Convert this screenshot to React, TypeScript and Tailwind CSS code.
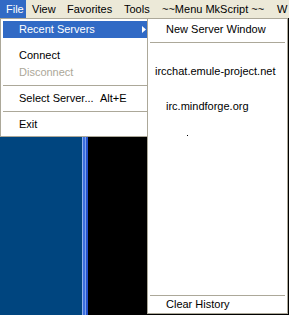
import React from "react";

/* ---------------------------------- data ---------------------------------- */
const menuBar = [
  { label: "File", w: "w-[26px]", active: true },
  { label: "View", w: "w-[35px]" },
  { label: "Favorites", w: "w-[57px]" },
  { label: "Tools", w: "w-[38px]" },
  { label: "~~Menu MkScript ~~", w: "w-[115px]" },
  { label: "W", w: "w-[18px]" },
];

export default function App() {
  return (
    <div
      className="relative w-[289px] h-[315px] overflow-hidden bg-[#00457f] text-[11px] text-black"
      style={{ fontFamily: '"Liberation Sans", Arial, sans-serif' }}
    >
      {/* menu bar */}
      <div className="flex h-[18px] bg-[#ece9d8]">
        {menuBar.map((m) => (
          <div
            key={m.label}
            className={`${m.w} shrink-0 whitespace-nowrap pl-[6px] leading-[18px] ${
              m.active ? "bg-[#316ac5] text-white" : ""
            }`}
          >
            {m.label}
          </div>
        ))}
      </div>

      {/* window behind the menus */}
      <div className="flex h-[297px]">
        <div className="w-[82px] bg-[#00457f]" />
        <div className="w-px bg-[#8fb0ee]" />
        <div className="w-[2px] bg-[#3b6fe0]" />
        <div className="w-px bg-[#7fa3ec]" />
        <div className="w-[2px] bg-[#2451c9]" />
        <div className="flex-1 bg-black" />
      </div>

      <FileMenu />
      <RecentMenu />
    </div>
  );
}

function Separator() {
  return (
    <div className="h-[9px] flex items-center">
      <div className="h-px w-full bg-[#aca899]" />
    </div>
  );
}

function FileMenu() {
  return (
    <div className="absolute left-0 top-[18px] w-[152px] h-[119px] border border-[#aca899] bg-white pt-[2px] px-[2px]">
      <div className="relative h-[17px] leading-[17px] bg-[#316ac5] text-white pl-[16px]">
        Recent Servers
        <svg className="absolute left-[139px] top-[5px]" width="4" height="7" viewBox="0 0 4 7">
          <path d="M0 0 L4 3.5 L0 7 Z" fill="#ffffff" />
        </svg>
      </div>
      <div className="h-[9px]" />
      <div className="h-[17px] leading-[17px] pl-[16px]">Connect</div>
      <div className="h-[17px] leading-[17px] pl-[16px] text-[#aca899]">Disconnect</div>
      <Separator />
      <div className="flex h-[17px] leading-[17px] pl-[16px]">
        <span className="w-[81px] whitespace-nowrap">Select Server...</span>
        <span>Alt+E</span>
      </div>
      <Separator />
      <div className="h-[17px] leading-[17px] pl-[16px]">Exit</div>
    </div>
  );
}

function RecentMenu() {
  return (
    <div className="absolute left-[147px] top-[18px] w-[141px] h-[296px] border border-[#aca899] bg-white pt-[2px] px-[2px] flex flex-col">
      <div className="h-[17px] leading-[17px] pl-[16px] whitespace-nowrap">New Server Window</div>
      <Separator />
      <div className="mt-[16px] h-[17px] leading-[17px] pl-[5px] whitespace-nowrap">
        ircchat.emule-project.net
      </div>
      <div className="mt-[18px] h-[17px] leading-[17px] pl-[16px] whitespace-nowrap">irc.mindforge.org</div>
      <div className="mt-[20px] ml-[37px] w-px h-px bg-black" />
      <div className="mt-auto h-px bg-[#aca899]" />
      <div className="h-[17px] leading-[17px] pl-[16px] whitespace-nowrap">Clear History</div>
    </div>
  );
}
